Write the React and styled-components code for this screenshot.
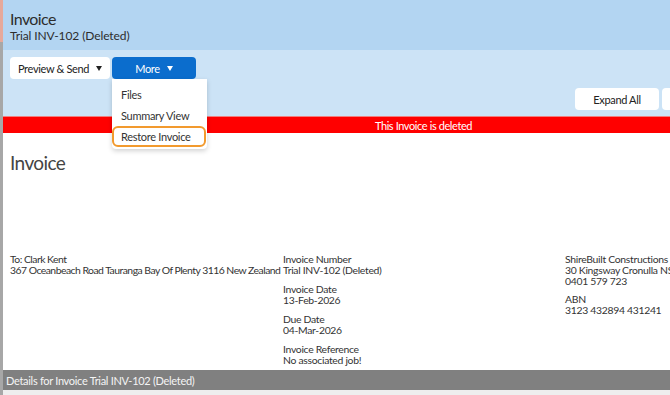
import React from "react";
import styled, { createGlobalStyle } from "styled-components";

const GlobalStyle = createGlobalStyle`
  html, body {
    margin: 0;
    padding: 0;
    overflow: hidden;
    background: #ffffff;
    font-family: Lato, "Noto Sans", sans-serif;
    color: #333333;
  }
`;

const Shell = styled.div`
  display: flex;
  width: 844px;
  min-height: 395px;
`;

const Rail = styled.div`
  width: 3px;
  flex: none;
  background: linear-gradient(#e6a99b 0 42px, #a7a7a7 42px);
`;

const Main = styled.div`
  flex: 1;
  display: flex;
  flex-direction: column;
`;

const Header = styled.header`
  height: 50px;
  box-sizing: border-box;
  padding: 9px 7px 0;
  background: #b3d5f2;
`;

const Title = styled.h1`
  margin: 0;
  font-size: 16px;
  line-height: 20px;
  font-weight: 400;
  letter-spacing: -0.6px;
  color: #2d2d2d;
`;

const Subtitle = styled.div`
  font-size: 12px;
  line-height: 14px;
  letter-spacing: -0.1px;
  color: #2d2d2d;
`;

const Toolbar = styled.div`
  height: 66px;
  box-sizing: border-box;
  background: #cce3f6;
  padding: 7px 7px 0;
  display: flex;
  flex-direction: column;
`;

const ButtonRow = styled.div`
  display: flex;
  gap: ${(p) => p.$gap || 2}px;
  justify-content: ${(p) => (p.$end ? "flex-end" : "flex-start")};
  padding-right: ${(p) => (p.$end ? 91 : 0)}px;
  margin-top: ${(p) => p.$top || 0}px;
`;

const MenuWrap = styled.div`
  position: relative;
`;

const Button = styled.button`
  height: 22px;
  width: ${(p) => p.$w}px;
  box-sizing: border-box;
  border: none;
  border-radius: 4px;
  padding: 0;
  font-family: inherit;
  font-size: 11px;
  letter-spacing: -0.35px;
  display: flex;
  align-items: center;
  justify-content: center;
  gap: 7px;
  background: ${(p) => (p.$primary ? "#0b6dcd" : "#ffffff")};
  color: ${(p) => (p.$primary ? "#ffffff" : "#222222")};
`;

const Caret = styled.span`
  width: 0;
  height: 0;
  border-left: 3.5px solid transparent;
  border-right: 3.5px solid transparent;
  border-top: 5px solid currentColor;
`;

const Menu = styled.div`
  position: absolute;
  top: 22px;
  left: 0;
  width: 95px;
  padding: 5px 0 2px;
  background: #ffffff;
  box-shadow: 0 2px 5px rgba(0, 0, 0, 0.18);
  border-radius: 0 0 4px 4px;
  z-index: 5;
`;

const MenuItem = styled.div`
  height: 21px;
  display: flex;
  align-items: center;
  margin-right: ${(p) => (p.$focus ? 1 : 0)}px;
  font-size: 11px;
  letter-spacing: -0.3px;
  color: #333333;
  box-sizing: border-box;
  border-radius: 6px;
  border: 2px solid ${(p) => (p.$focus ? "#f29a2e" : "transparent")};
  padding-left: 7px;
`;

const Banner = styled.div`
  height: 17px;
  background: #ff0000;
  border-top: 1px solid #f08080;
  box-sizing: border-box;
  display: flex;
  align-items: center;
  justify-content: center;
  color: #ffffff;
  font-size: 11px;
  letter-spacing: -0.4px;
`;

const Content = styled.section`
  flex: none;
  height: 237px;
  box-sizing: border-box;
  padding: 18px 7px 0;
`;

const DocTitle = styled.h2`
  margin: 0;
  font-size: 19px;
  line-height: 24px;
  font-weight: 400;
  letter-spacing: -0.6px;
  color: #444444;
`;

const Details = styled.div`
  margin-top: 79px;
  display: grid;
  grid-template-columns: 273px 282px 1fr;
  font-size: 10.4px;
  line-height: 11px;
  letter-spacing: -0.3px;
  color: #333333;
`;

const Column = styled.div`
  display: flex;
  flex-direction: column;
  gap: ${(p) => p.$gap || 8}px;
`;

const Field = styled.div`
  display: flex;
  flex-direction: column;
  white-space: nowrap;
  letter-spacing: ${(p) => (p.$tight ? "-0.52px" : "inherit")};
`;

const SectionBar = styled.div`
  height: 20px;
  background: #808080;
  color: #f4f4f4;
  font-size: 11px;
  letter-spacing: -0.3px;
  display: flex;
  align-items: center;
  padding-left: 3px;
`;

const Footer = styled.div`
  flex: 1;
  background: #eeeeee;
`;

export default function App() {
  return (
    <>
      <GlobalStyle />
      <Shell>
        <Rail />
        <Main>
          <Header>
            <Title>Invoice</Title>
            <Subtitle>Trial INV-102 (Deleted)</Subtitle>
          </Header>
          <Toolbar>
            <ButtonRow>
              <Button $w={100}>
                Preview &amp; Send <Caret />
              </Button>
              <MenuWrap>
                <Button $primary $w={84}>
                  More <Caret />
                </Button>
                <Menu>
                  <MenuItem>Files</MenuItem>
                  <MenuItem>Summary View</MenuItem>
                  <MenuItem $focus>Restore Invoice</MenuItem>
                </Menu>
              </MenuWrap>
            </ButtonRow>
            <ButtonRow $end $gap={3} $top={9}>
              <Button $w={84}>Expand All</Button>
              <Button $w={84}>Collapse All</Button>
            </ButtonRow>
          </Toolbar>
          <Banner>This Invoice is deleted</Banner>
          <Content>
            <DocTitle>Invoice</DocTitle>
            <Details>
              <Column>
                <Field $tight>
                  <span>To: Clark Kent</span>
                  <span>367 Oceanbeach Road Tauranga Bay Of Plenty 3116 New Zealand</span>
                </Field>
              </Column>
              <Column>
                <Field>
                  <span>Invoice Number</span>
                  <span>Trial INV-102 (Deleted)</span>
                </Field>
                <Field>
                  <span>Invoice Date</span>
                  <span>13-Feb-2026</span>
                </Field>
                <Field>
                  <span>Due Date</span>
                  <span>04-Mar-2026</span>
                </Field>
                <Field>
                  <span>Invoice Reference</span>
                  <span>No associated job!</span>
                </Field>
              </Column>
              <Column $gap={7}>
                <Field>
                  <span>ShireBuilt Constructions</span>
                  <span>30 Kingsway Cronulla NSW 2230</span>
                  <span>0401 579 723</span>
                </Field>
                <Field>
                  <span>ABN</span>
                  <span>3123 432894 431241</span>
                </Field>
              </Column>
            </Details>
          </Content>
          <SectionBar>Details for Invoice Trial INV-102 (Deleted)</SectionBar>
          <Footer />
        </Main>
      </Shell>
    </>
  );
}
